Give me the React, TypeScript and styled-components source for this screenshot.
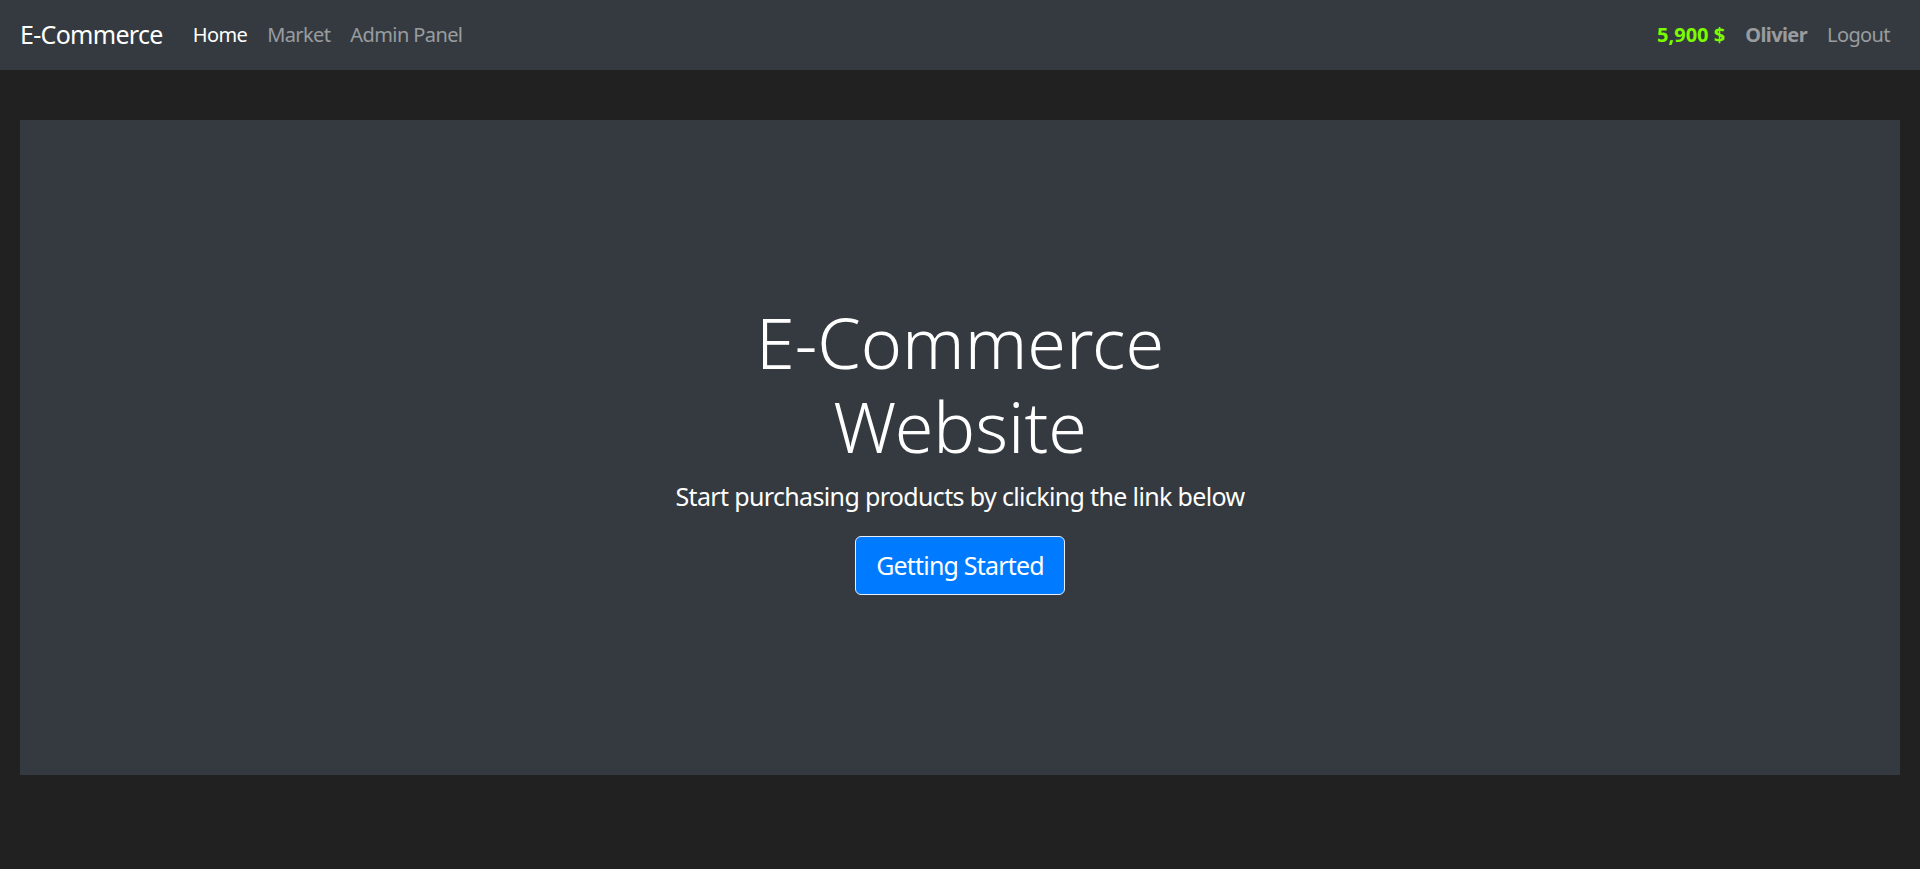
import React from 'react'
import styled, {createGlobalStyle} from 'styled-components'

const GlobalStyle = createGlobalStyle`
  * {
    box-sizing: border-box;
  }
  body {
    margin: 0;
    background-color: #212121;
    font-family: "Segoe UI", "Noto Sans", "Open Sans", sans-serif;
    color: #ffffff;
  }
`

const leftLinks = [
  {label: 'Home', active: true},
  {label: 'Market', active: false},
  {label: 'Admin Panel', active: false},
]

export default function App() {
  return (
    <>
      <GlobalStyle />
      <Navbar>
        <Brand href="#">E-Commerce</Brand>
        <NavList>
          {leftLinks.map((link) => (
            <NavLink key={link.label} href="#" $active={link.active}>
              {link.label}
            </NavLink>
          ))}
        </NavList>
        <NavList className="right">
          <Budget>5,900 $</Budget>
          <UserName>Olivier</UserName>
          <NavLink href="#">Logout</NavLink>
        </NavList>
      </Navbar>
      <Page>
        <Jumbotron>
          <Content>
            <Heading>E-Commerce Website</Heading>
            <Lead>Start purchasing products by clicking the link below</Lead>
            <StartButton href="#">Getting Started</StartButton>
          </Content>
        </Jumbotron>
      </Page>
    </>
  )
}

const Navbar = styled.nav`
  height: 70px;
  padding: 10px 20px;
  background-color: #343a40;
  display: flex;
  align-items: center;
  .right {
    margin-left: auto;
  }
`

const Brand = styled.a`
  font-size: 25px;
  line-height: 1.5;
  letter-spacing: -0.7px;
  color: #ffffff;
  text-decoration: none;
  margin-right: 20px;
`

const NavList = styled.div`
  display: flex;
  align-items: center;
`

const NavLink = styled.a<{$active?: boolean}>`
  padding: 10px;
  font-size: 20px;
  line-height: 1.5;
  letter-spacing: -0.6px;
  color: ${(p) => (p.$active ? '#ffffff' : 'rgba(255, 255, 255, 0.5)')};
  text-decoration: none;
`

const Budget = styled.span`
  padding: 10px;
  font-size: 20px;
  line-height: 1.5;
  font-weight: 700;
  color: #7cfc00;
`

const UserName = styled(Budget)`
  letter-spacing: -0.6px;
  color: rgba(255, 255, 255, 0.5);
`

const Page = styled.main`
  padding: 50px 20px 94px;
`

const Jumbotron = styled.section`
  height: 655px;
  background-color: #343a40;
  display: flex;
  align-items: center;
  justify-content: center;
`

const Content = styled.div`
  width: 600px;
  display: flex;
  flex-direction: column;
  align-items: center;
  text-align: center;
`

const Heading = styled.h1`
  margin: 0 0 10px;
  font-size: 70px;
  font-weight: 300;
  line-height: 84px;
`

const Lead = styled.p`
  margin: 0 0 20px;
  font-size: 25px;
  line-height: 1.5;
  letter-spacing: -0.65px;
  white-space: nowrap;
`

const StartButton = styled.a`
  display: inline-block;
  padding: 10px 20px;
  font-size: 25px;
  line-height: 1.5;
  letter-spacing: -0.8px;
  color: #ffffff;
  background-color: #007bff;
  border: 1px solid #e8eef5;
  border-radius: 6px;
  text-decoration: none;
`
